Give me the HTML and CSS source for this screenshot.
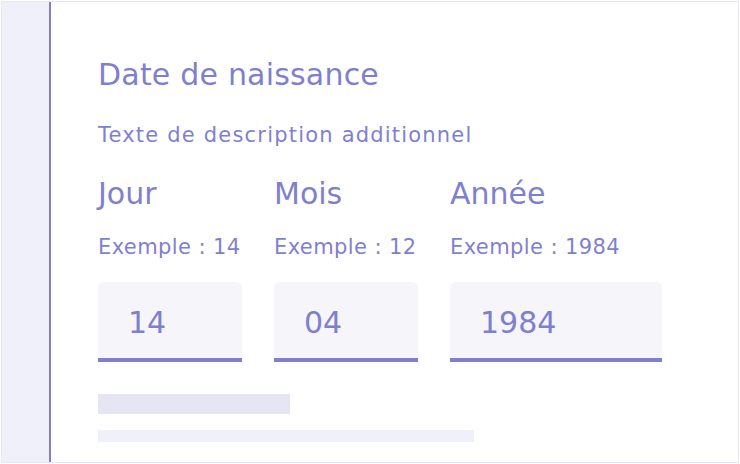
FILE: index.html
```html
<!DOCTYPE html>
<html lang="fr">
<head>
<meta charset="utf-8">
<link rel="stylesheet" href="styles.css">
</head>
<body>
<div class="frame">
  <div class="rail"></div>
  <div class="content">
    <h1 class="title">Date de naissance</h1>
    <p class="desc">Texte de description additionnel</p>
    <div class="fields">
      <div class="field field-sm">
        <div class="label">Jour</div>
        <div class="hint">Exemple : 14</div>
        <div class="input">14</div>
      </div>
      <div class="field field-sm">
        <div class="label">Mois</div>
        <div class="hint">Exemple : 12</div>
        <div class="input">04</div>
      </div>
      <div class="field field-lg">
        <div class="label">Année</div>
        <div class="hint">Exemple : 1984</div>
        <div class="input">1984</div>
      </div>
    </div>
    <div class="skeleton skeleton-a"></div>
    <div class="skeleton skeleton-b"></div>
  </div>
</div>
</body>
</html>
```
FILE: styles.css
```css
* { box-sizing: border-box; }
html, body { margin: 0; padding: 0; background: #fff; }
body {
  width: 740px;
  height: 464px;
  padding: 1px;
  font-family: "DejaVu Sans", "Open Sans", sans-serif;
  color: #7f7fd0;
}
.frame {
  display: flex;
  height: 462px;
  border: 1px solid #e5e5f4;
  background: #fff;
}
.rail {
  width: 49px;
  flex: none;
  background: #f0f0fa;
  border-right: 2px solid #7f7fd0;
}
.content {
  padding-left: 47px;
  padding-top: 55px;
}
.title {
  margin: 0;
  font-size: 30px;
  font-weight: 400;
  line-height: 36px;
  letter-spacing: 0.2px;
}
.desc {
  margin: 28px 0 0;
  font-size: 21px;
  line-height: 28px;
  letter-spacing: 1.2px;
}
.fields {
  display: flex;
  gap: 32px;
  margin-top: 27px;
}
.field-sm { width: 144px; }
.field-lg { width: 212px; }
.label {
  font-size: 30px;
  line-height: 36px;
}
.hint {
  margin-top: 21px;
  font-size: 21px;
  line-height: 28px;
  letter-spacing: 0.4px;
  white-space: nowrap;
}
.input {
  margin-top: 21px;
  height: 80px;
  background: #f5f5fa;
  border-radius: 6px 6px 0 0;
  border-bottom: 4px solid #7f7fd0;
  padding: 6px 0 0 30px;
  font-size: 30px;
  line-height: 70px;
}
.skeleton-a {
  margin-top: 32px;
  width: 192px;
  height: 20px;
  background: #e5e5f4;
}
.skeleton-b {
  margin-top: 16px;
  width: 376px;
  height: 12px;
  background: #f0f0fa;
}
```
